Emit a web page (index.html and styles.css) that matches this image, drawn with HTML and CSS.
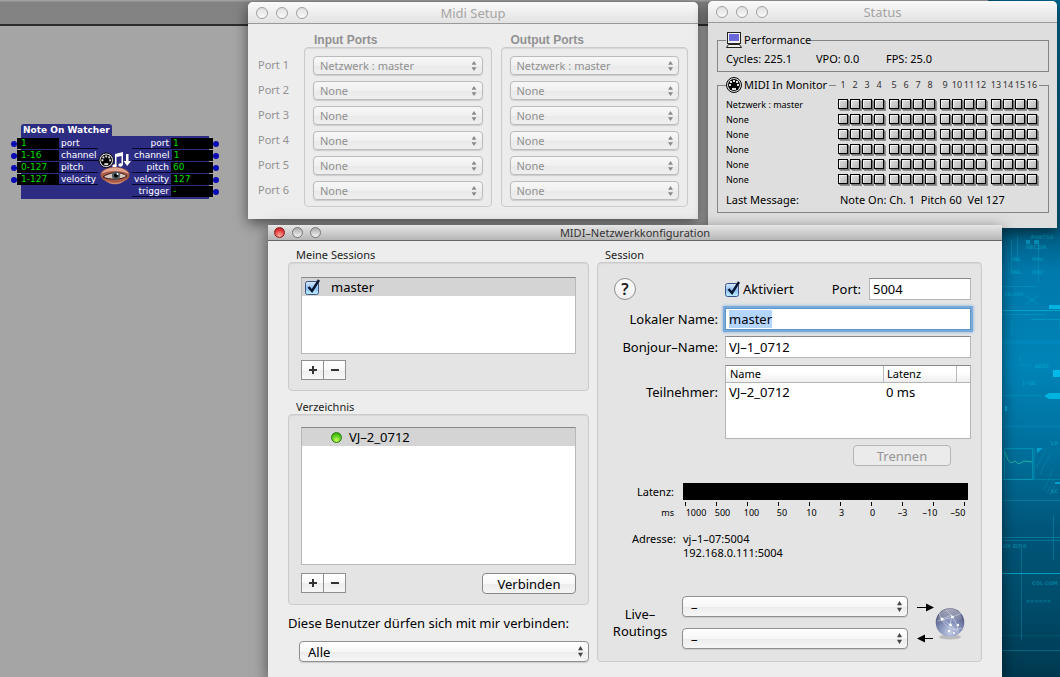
FILE: index.html
```html
<!DOCTYPE html>
<html lang="de">
<head>
<meta charset="utf-8">
<title>MIDI-Netzwerkkonfiguration</title>
<link rel="stylesheet" href="styles.css">
</head>
<body>
<svg class="defs" aria-hidden="true">
  <defs>
    <linearGradient id="face" x1="0" y1="0" x2="1" y2="1"><stop offset="0" stop-color="#e4e4e4"/><stop offset="1" stop-color="#b4b4b4"/></linearGradient>
    <linearGradient id="tickbox" x1="0" y1="0" x2="0" y2="1"><stop offset="0" stop-color="#dcebfb"/><stop offset=".5" stop-color="#8fc0f3"/><stop offset="1" stop-color="#bdf0ff"/></linearGradient>
    <radialGradient id="orb" cx=".5" cy=".85" r=".85"><stop offset="0" stop-color="#c3cbe6"/><stop offset=".45" stop-color="#8490b8"/><stop offset="1" stop-color="#3c4168"/></radialGradient>
    <linearGradient id="gloss" x1="0" y1="0" x2="0" y2="1"><stop offset="0" stop-color="#fff" stop-opacity=".55"/><stop offset="1" stop-color="#fff" stop-opacity=".05"/></linearGradient>
    <linearGradient id="sea" x1="0" y1="0" x2="0" y2="1"><stop offset="0" stop-color="#00688f"/><stop offset=".34" stop-color="#005b80"/><stop offset=".4" stop-color="#0079ab"/><stop offset=".54" stop-color="#0084b8"/><stop offset=".68" stop-color="#006d98"/><stop offset=".78" stop-color="#00567a"/><stop offset=".9" stop-color="#004b69"/><stop offset="1" stop-color="#00384f"/></linearGradient>
    <g id="led"><rect x="2" y="2" width="10" height="10" fill="#555" opacity=".55"/><rect x="1" y="1" width="10" height="10" fill="#777" /><rect x=".5" y=".5" width="9" height="9" fill="url(#face)" stroke="#000"/><path d="M1.5 8.500V1.500H8.500" fill="none" stroke="#f4f4f4"/></g>
    <g id="led-four"><use href="#led"/><use href="#led" x="12"/><use href="#led" x="24"/><use href="#led" x="36"/></g>
    <g id="led-row"><use href="#led-four"/><use href="#led-four" x="51"/><use href="#led-four" x="102"/><use href="#led-four" x="153"/></g>
    <g id="din"><circle cx="8" cy="8" r="7.500" fill="#ddd" stroke="#000"/><circle cx="8" cy="8" r="6" fill="#000"/><g fill="#ddd"><rect x="3" y="7" width="2" height="2"/><rect x="4" y="4" width="2" height="2"/><rect x="7" y="3" width="2" height="2"/><rect x="10" y="4" width="2" height="2"/><rect x="11" y="7" width="2" height="2"/><rect x="6" y="11" width="4" height="2"/></g></g>
  </defs>
</svg>

<main class="desktop">
  <svg class="wallpaper" viewBox="0 0 60 677" preserveAspectRatio="xMaxYMin slice" aria-hidden="true">
    <rect width="60" height="677" fill="url(#sea)"/>
    <g fill="none" stroke="#00b0cc" stroke-width="1">
      <path d="M0 310.500H60M0 573.500H60" opacity=".85"/>
      <path d="M0 314.500H46M0 395.500H42M0 479.500H60M0 537.500H60M0 540.500H60M0 650.500H60M0 286.500H36M0 500.500H60" opacity=".35"/>
      <path d="M11.500 240V275M17.500 236V262M38.500 240V282M11.500 320V336M20.500 355V365H30M53.500 515V560M21.500 545V640" opacity=".3"/>
      <path d="M4.500 448.500H32.500V479.500H4.500ZM34 448V479M31 319.500H60V330M26 295L38 305M38 295L26 305" opacity=".5"/>
      <path d="M5 452L8 460 11 463 15 461 19 464 24 461 32 462" stroke="#2fd0a8" opacity=".7"/>
      <path d="M44 490L53 470M47 493L54 479M50 495L55 486M36 468L46 448M40 474L50 454" opacity=".25"/>
    </g>
    <g fill="#00b9e6">
      <rect x="49" y="305" width="11" height="4" opacity=".9"/><rect x="53" y="370" width="7" height="7"/><path d="M44 396L49 393H60V399H49Z" opacity=".9"/><rect x="5" y="406" width="2" height="5" opacity=".8"/><rect x="26" y="240" width="4" height="4" opacity=".5"/><rect x="34" y="240" width="5" height="4" opacity=".5"/><path d="M37 448H43L37 453Z" opacity=".7"/>
      <rect x="55" y="482" width="5" height="2" opacity=".7"/><rect x="0" y="635" width="60" height="1" opacity=".1"/><rect x="0" y="340" width="60" height="4" opacity=".12"/><rect x="0" y="425" width="60" height="3" opacity=".12"/>
    </g>
    <g class="wallpaper-text">
      <text x="26" y="249">VECZIA</text><text x="31" y="239">PORTSO</text><text x="12" y="261">INL</text><text x="32" y="261">00U</text><text x="12" y="274">INL</text><text x="32" y="274">00U</text><text x="4" y="296">28.000</text><text x="35" y="368">AEEC</text><text x="22" y="385">1–GE</text><text x="3" y="548">UX EIT 0</text><text x="32" y="585">COL COM</text><text x="26" y="603">======</text><text x="51" y="445">LX</text><text x="51" y="493">EC</text>
    </g>
  </svg>
  <div class="backdrop"><div class="backdrop-bar"></div></div>

  <section class="node" aria-label="Note On Watcher">
    <h2 class="node-title">Note On Watcher</h2>
    <div class="node-body">
      <div class="node-side">
        <label class="jack"><i class="pin"></i><input class="node-value" value="1"><span class="node-name">port</span></label>
        <label class="jack"><i class="pin"></i><input class="node-value" value="1-16"><span class="node-name">channel</span></label>
        <label class="jack"><i class="pin"></i><input class="node-value" value="0-127"><span class="node-name">pitch</span></label>
        <label class="jack"><i class="pin"></i><input class="node-value" value="1-127"><span class="node-name">velocity</span></label>
      </div>
      <svg class="node-icon" viewBox="0 0 34 50" aria-hidden="true">
        <use href="#din" x="0" y="16" transform="translate(.5 0) scale(.97)"/>
        <g fill="#fff"><ellipse cx="16.500" cy="29" rx="2.200" ry="1.800"/><ellipse cx="22.500" cy="28" rx="2.200" ry="1.800"/><path d="M17 17L25 15V28H23.500V19L18.500 20V29H17Z"/><path d="M28 17H30.500V24H33L29.200 29 25.500 24H28Z"/></g>
        <ellipse cx="17" cy="38" rx="14.500" ry="8" fill="#a75b46"/><path d="M3 37C8 29 25 28 31 37C24 33 10 33 3 37Z" fill="#e0a68f"/><path d="M5 40C11 35 23 34 29 39C24 43 11 43 5 40Z" fill="#d3c4be" stroke="#3a1a14"/><circle cx="18" cy="38.500" r="4" fill="#4d5a60"/><circle cx="18" cy="38.500" r="2" fill="#000"/><circle cx="19.500" cy="37" r="1" fill="#fff"/><path d="M6 42C12 47 22 47 28 42C23 49 11 49 6 42Z" fill="#d28a72"/>
      </svg>
      <div class="node-side">
        <label class="jack out"><span class="node-name">port</span><output class="node-value">1</output><i class="pin"></i></label>
        <label class="jack out"><span class="node-name">channel</span><output class="node-value">1</output><i class="pin"></i></label>
        <label class="jack out"><span class="node-name">pitch</span><output class="node-value">60</output><i class="pin"></i></label>
        <label class="jack out"><span class="node-name">velocity</span><output class="node-value">127</output><i class="pin"></i></label>
        <label class="jack out"><span class="node-name">trigger</span><output class="node-value">-</output><i class="pin"></i></label>
      </div>
    </div>
  </section>

  <section class="window setup">
    <header class="titlebar"><span class="lights"><button aria-label="Close"></button><button aria-label="Minimize"></button><button aria-label="Zoom"></button></span><h1>Midi Setup</h1></header>
    <div class="ports">
      <div class="port-names"><span>Port 1</span><span>Port 2</span><span>Port 3</span><span>Port 4</span><span>Port 5</span><span>Port 6</span></div>
      <div class="port-column">
        <h2>Input Ports</h2>
        <div class="group port-list">
          <span class="popup small"><select disabled aria-label="Input Port 1"><option>Netzwerk : master</option></select></span>
          <span class="popup small"><select disabled aria-label="Input Port 2"><option>None</option></select></span>
          <span class="popup small"><select disabled aria-label="Input Port 3"><option>None</option></select></span>
          <span class="popup small"><select disabled aria-label="Input Port 4"><option>None</option></select></span>
          <span class="popup small"><select disabled aria-label="Input Port 5"><option>None</option></select></span>
          <span class="popup small"><select disabled aria-label="Input Port 6"><option>None</option></select></span>
        </div>
      </div>
      <div class="port-column">
        <h2>Output Ports</h2>
        <div class="group port-list">
          <span class="popup small"><select disabled aria-label="Output Port 1"><option>Netzwerk : master</option></select></span>
          <span class="popup small"><select disabled aria-label="Output Port 2"><option>None</option></select></span>
          <span class="popup small"><select disabled aria-label="Output Port 3"><option>None</option></select></span>
          <span class="popup small"><select disabled aria-label="Output Port 4"><option>None</option></select></span>
          <span class="popup small"><select disabled aria-label="Output Port 5"><option>None</option></select></span>
          <span class="popup small"><select disabled aria-label="Output Port 6"><option>None</option></select></span>
        </div>
      </div>
    </div>
  </section>

  <section class="window status">
    <header class="titlebar"><span class="lights"><button aria-label="Close"></button><button aria-label="Minimize"></button><button aria-label="Zoom"></button></span><h1>Status</h1></header>
    <div class="status-body">
      <fieldset class="frame">
        <legend><svg class="legend-icon" viewBox="0 0 16 16" aria-hidden="true"><rect x="1.500" y=".5" width="13" height="11" fill="#f2f2f2" stroke="#222"/><rect x="3" y="2" width="10" height="7" fill="#6a68d8"/><path d="M2.500 12.500H13.500L15.500 15.500H.5Z" fill="#eee" stroke="#222"/></svg><span>Performance</span></legend>
        <div class="stats"><span>Cycles: 225.1</span><span>VPO: 0.0</span><span>FPS: 25.0</span></div>
      </fieldset>
      <fieldset class="frame monitor">
        <legend><svg class="legend-icon" viewBox="0 0 16 16" aria-hidden="true"><use href="#din"/></svg><span>MIDI In Monitor</span><i class="rule"></i><span class="channels"><b>1</b><b>2</b><b>3</b><b>4</b><b>5</b><b>6</b><b>7</b><b>8</b><b>9</b><b>10</b><b>11</b><b>12</b><b>13</b><b>14</b><b>15</b><b>16</b></span></legend>
        <div class="monitor-row"><span>Netzwerk : master</span><svg class="leds"><use href="#led-row"/></svg></div>
        <div class="monitor-row"><span>None</span><svg class="leds"><use href="#led-row"/></svg></div>
        <div class="monitor-row"><span>None</span><svg class="leds"><use href="#led-row"/></svg></div>
        <div class="monitor-row"><span>None</span><svg class="leds"><use href="#led-row"/></svg></div>
        <div class="monitor-row"><span>None</span><svg class="leds"><use href="#led-row"/></svg></div>
        <div class="monitor-row"><span>None</span><svg class="leds"><use href="#led-row"/></svg></div>
        <div class="message"><span>Last Message:</span><span>Note On: Ch. 1&nbsp; Pitch 60&nbsp; Vel 127</span></div>
      </fieldset>
    </div>
  </section>

  <section class="window config">
    <header class="titlebar active"><span class="lights"><button class="close" aria-label="Schließen"></button><button aria-label="Minimieren"></button><button aria-label="Zoomen"></button></span><h1>MIDI–Netzwerkkonfiguration</h1></header>
    <div class="config-body">
      <div class="left">
        <h2 class="caption">Meine Sessions</h2>
        <div class="group sessions">
          <div class="list"><label class="item"><span class="check"><input type="checkbox" checked><svg viewBox="0 0 16 18" aria-hidden="true"><rect x=".5" y="3.500" width="13" height="13" rx="2" fill="url(#tickbox)" stroke="#3b5288"/><path d="M3.500 9L7 13 14 2" fill="none" stroke="#0a1530" stroke-width="2.400"/></svg></span>master</label></div>
          <div class="buttons"><span class="plusminus"><button aria-label="Hinzufügen"><svg viewBox="0 0 8 8"><path d="M0 4H8M4 0V8" stroke="#333" stroke-width="2"/></svg></button><button aria-label="Entfernen"><svg viewBox="0 0 8 8"><path d="M0 4H8" stroke="#333" stroke-width="2"/></svg></button></span></div>
        </div>
        <h2 class="caption">Verzeichnis</h2>
        <div class="group directory">
          <div class="list"><div class="item item-peer"><i class="online"></i>VJ–2_0712</div></div>
          <div class="buttons"><span class="plusminus"><button aria-label="Hinzufügen"><svg viewBox="0 0 8 8"><path d="M0 4H8M4 0V8" stroke="#333" stroke-width="2"/></svg></button><button aria-label="Entfernen"><svg viewBox="0 0 8 8"><path d="M0 4H8" stroke="#333" stroke-width="2"/></svg></button></span><button class="push">Verbinden</button></div>
        </div>
        <label class="users" for="users">Diese Benutzer dürfen sich mit mir verbinden:</label>
        <span class="popup users-popup"><select id="users"><option>Alle</option></select></span>
      </div>

      <div class="right">
        <h2 class="caption">Session</h2>
        <form class="group session">
          <div class="row head-row">
            <button type="button" class="help" aria-label="Hilfe">?</button>
            <label class="enable"><span class="check"><input type="checkbox" checked><svg viewBox="0 0 16 18" aria-hidden="true"><rect x=".5" y="3.500" width="13" height="13" rx="2" fill="url(#tickbox)" stroke="#3b5288"/><path d="M3.500 9L7 13 14 2" fill="none" stroke="#0a1530" stroke-width="2.400"/></svg></span>Aktiviert</label>
            <label for="port">Port:</label><input class="field port-field" id="port" value="5004">
          </div>
          <div class="row"><label class="name" for="local-name">Lokaler Name:</label><input class="field" id="local-name" value="master"></div>
          <div class="row"><label class="name" for="bonjour">Bonjour–Name:</label><input class="field" id="bonjour" value="VJ–1_0712"></div>
          <div class="row table-row"><span class="name" id="peers">Teilnehmer:</span>
            <div class="table-box"><table aria-labelledby="peers"><thead><tr><th>Name</th><th>Latenz</th><th></th></tr></thead><tbody><tr><td>VJ–2_0712</td><td>0 ms</td><td></td></tr></tbody></table></div>
          </div>
          <button type="button" class="push disconnect" disabled>Trennen</button>
          <div class="row latency"><span class="tiny-name">Latenz:</span><div class="meter"></div></div>
          <div class="row scale"><span class="tiny-name">ms</span>
            <div class="ruler">
              <div class="marks"><i></i><i></i><i></i><i></i><i></i><i></i><i></i><i></i><i></i><i></i></div>
              <div class="ticks"><span>1000</span><span>500</span><span>100</span><span>50</span><span>10</span><span>3</span><span>0</span><span>–3</span><span>–10</span><span>–50</span></div>
            </div>
          </div>
          <div class="row address"><span class="tiny-name">Adresse:</span><span>vj–1–07:5004<br>192.168.0.111:5004</span></div>
          <div class="routing">
            <span class="routing-name">Live–<br>Routings</span>
            <div class="routing-popups">
              <span class="popup"><select aria-label="Live-Routing Ausgang"><option>–</option></select></span>
              <span class="popup"><select aria-label="Live-Routing Eingang"><option>–</option></select></span>
            </div>
            <svg class="network" viewBox="0 0 50 44" aria-hidden="true">
              <path d="M0 6.500H10" stroke="#000"/><path d="M9 2.500L17 6.500 9 10.500Z"/><path d="M6 37.500H16" stroke="#000"/><path d="M8 33.500L0 37.500 8 41.500Z"/>
              <ellipse cx="33" cy="36" rx="11" ry="2.500" fill="#000" opacity=".18"/>
              <circle cx="33" cy="21.500" r="14.300" fill="url(#orb)"/><path d="M21 18C22 4 44 4 45 18C38 22 28 22 21 18Z" fill="url(#gloss)"/>
              <g fill="none" stroke="#e8ecfa" stroke-width=".7" opacity=".7"><path d="M22 12C27 26 34 31 45 27M20 20C28 19 39 15 44 12M25 18L35 14 33 24 40 30M33 24L25 18M29 9C35 14 42 24 41 32"/></g>
              <g fill="#fff"><circle cx="25" cy="18" r="1.500"/><circle cx="35.500" cy="16" r="1.300"/><circle cx="33.500" cy="24" r="1.400"/><circle cx="41" cy="24" r="1.200"/><circle cx="32" cy="30" r="1.200"/><circle cx="37" cy="32" r="1"/></g>
            </svg>
          </div>
        </form>
      </div>
    </div>
  </section>
</main>
<script src="app.js"></script>
</body>
</html>
```
FILE: styles.css
```css
* { box-sizing: border-box; }
body { margin: 0; font: 13px/16px "Noto Sans", sans-serif; color: #000; }
button, input, select { font: inherit; color: inherit; margin: 0; }
h1, h2 { margin: 0; font-weight: 400; }
.defs { position: absolute; width: 0; height: 0; }

.desktop { position: relative; min-height: 100vh; overflow: hidden; background: #005b80; }
.wallpaper { position: absolute; top: 0; right: 0; width: 60px; height: 677px; }
.wallpaper-text { font: 700 5px "DejaVu Sans", sans-serif; fill: #00c0dc; opacity: .4; }
.backdrop { position: absolute; inset: 0 72px 0 0; background: #a5a5a5; }
.backdrop-bar { height: 26px; background: linear-gradient(#a0a0a0 1px, #838383 2px); border-bottom: 2px solid #2c2c2c; }

/* patch node */
.node { position: absolute; left: 11px; top: 124px; color: #fff; font: 9px/12px "DejaVu Sans", sans-serif; }
.node-title { display: inline-block; margin-left: 10px; padding: 0 2px; background: #2c2c82; border-radius: 3px 3px 0 0; font-size: 9px; font-weight: 700; line-height: 12px; vertical-align: top; }
.node-body { display: flex; min-height: 63px; padding-top: 1px; background: linear-gradient(#2c2c82, #2c2c82) 10px 0 / calc(100% - 20px) 100% no-repeat; }
.node-side { width: 87px; }
.jack { display: flex; align-items: center; height: 12px; padding-top: 1px; }
.pin { flex: none; width: 6px; height: 6px; border-radius: 50%; background: #0b0bb4; }
.node-value { width: 42px; height: 11px; padding: 0 4px; border: 0; background: #000; color: #0d0; font: inherit; line-height: 11px; }
.node-name { flex: 1; height: 11px; padding: 0 2px; border-bottom: 1px solid #05052c; line-height: 11px; }
.out .node-name { text-align: right; }
.out .node-value { padding: 0 2px; }
.node-icon { width: 34px; height: 50px; }

/* windows */
.window { position: absolute; background: #ededed; border-radius: 5px 5px 0 0; box-shadow: 0 4px 14px rgba(0, 0, 0, .55); }
.titlebar { display: grid; grid-template-columns: 70px 1fr 70px; align-items: center; height: 22px; border-bottom: 1px solid #999; border-radius: 5px 5px 0 0; background: linear-gradient(#fafafa, #e2e2e2); color: #a5a5a5; }
.titlebar h1 { font-size: 13px; text-align: center; }
.lights { display: flex; gap: 8px; padding-left: 8px; }
.lights button { width: 12px; height: 12px; padding: 0; border: 1px solid #a0a0a0; border-radius: 50%; background: linear-gradient(#e0e0e0, #fafafa); }
.active { height: 16px; background: linear-gradient(#e6e6e6, #b6b6b6); border-color: #666; color: #333; border-radius: 0; }
.active h1 { font-size: 11px; line-height: 14px; }
.active .lights { gap: 7px; padding-left: 6px; }
.active .lights button { width: 11px; height: 11px; border-color: #777; background: linear-gradient(#aaa, #f4f4f4); }
.active .lights .close { border-color: #87201f; background: radial-gradient(circle at 50% 85%, #ffb0a0, #e3383a 60%, #b02020); }

.group { border: 1px solid #cbcbcb; border-radius: 4px; background: #e4e4e4; box-shadow: inset 0 1px 1px #d6d6d6; }
.popup { position: relative; display: block; }
.popup select { appearance: none; display: block; width: 100%; height: 21px; padding: 0 8px; border: 1px solid #8f8f8f; border-radius: 4px; background: linear-gradient(#fff, #f6f6f6 50%, #ececec 51%, #f6f6f6); box-shadow: 0 1px 1px #ccc; }
.popup::after { content: ""; position: absolute; top: 5px; right: 6px; width: 5px; height: 11px; background: #444; clip-path: polygon(50% 0, 100% 38%, 50% 38%, 50% 62%, 100% 62%, 50% 100%, 0 62%, 50% 62%, 50% 38%, 0 38%); }
.popup.small select { height: 19px; padding: 0 6px; border-color: #bcbcbc; color: #909090; opacity: 1; background: linear-gradient(#f7f7f7, #f0f0f0 50%, #e9e9e9 51%, #efefef); }
.popup.small::after { height: 10px; background: #8a8a8a; }

.setup { left: 248px; top: 2px; width: 450px; font-size: 11px; color: #929292; }
.ports { display: grid; grid-template-columns: 37px 1fr 1fr; gap: 9px; padding: 10px 10px 12px; }
.port-names { display: flex; flex-direction: column; gap: 6px; padding-top: 21px; line-height: 19px; }
.port-column h2 { padding: 0 10px; font: 700 12px/13px "Liberation Sans", sans-serif; }
.port-list { display: grid; gap: 6px; padding: 8px 8px 6px; background: #ececec; }

.status { right: 3px; top: 1px; width: 349px; background: #dedede; font-size: 11px; padding-bottom: 15px; }
.status-body { display: grid; gap: 4px; padding: 8px 8px 0 9px; }
.frame { min-width: 0; margin: 0; padding: 1px 8px 3px; border: 1px solid #858585; }
.frame legend { display: flex; align-items: center; gap: 2px; height: 18px; padding: 0; }
.legend-icon { width: 16px; height: 16px; }
.stats { display: flex; line-height: 18px; }
.stats span { width: 90px; }
.stats span + span { width: 70px; }
.rule { flex: 1; height: 1px; background: #858585; }
.monitor { padding: 1px 9px 4px 8px; }
.monitor legend { width: 100%; }
.channels { display: grid; grid-template-columns: repeat(3, 12px 12px 12px 15px) repeat(4, 12px); font-size: 9px; color: #333; }
.channels b { width: 10px; display: flex; justify-content: center; font-weight: 400; }
.monitor-row { display: flex; justify-content: space-between; height: 15px; padding-top: 4px; font-size: 9px; line-height: 11px; }
.leds { width: 201px; height: 12px; overflow: visible; }
.message { display: flex; padding-top: 7px; }
.message span:first-child { width: 114px; }

.config { left: 268px; right: 58px; top: 225px; bottom: 0; border-radius: 0; }
.config-body { display: grid; grid-template-columns: 301px minmax(0, 1fr); gap: 8px; padding: 6px 20px 16px; }
.caption { padding: 0 8px; font-size: 11px; line-height: 15px; color: #222; }
.left, .right { display: flex; flex-direction: column; }
.left .group { padding: 14px 12px 10px; }
.list { border: 1px solid #b8b8b8; border-top-color: #888; background: #fff; }
.sessions .list { height: 77px; }
.directory .list { height: 138px; }
.left .directory { padding-top: 12px; }
.sessions { margin-bottom: 8px; }
.item { display: flex; align-items: center; gap: 10px; height: 18px; padding-left: 3px; background: #d4d4d4; }
.item-peer { gap: 7px; padding-left: 29px; }
.online { width: 11px; height: 11px; border: 1px solid #2d7a10; border-radius: 50%; background: radial-gradient(circle at 50% 80%, #c8ff60, #50c818 60%, #2f9b10); }
.check { position: relative; display: inline-block; width: 16px; height: 18px; }
.check input { width: 14px; height: 14px; opacity: 0; }
.check svg { position: absolute; inset: 0; pointer-events: none; }
.buttons { display: flex; justify-content: space-between; margin-top: 6px; }
.directory .buttons { margin-top: 8px; }
.plusminus { display: flex; }
.plusminus button { display: grid; place-items: center; width: 23px; height: 20px; padding: 0; border: 1px solid #8f8f8f; background: linear-gradient(#fff, #fafafa 50%, #eee 51%, #f6f6f6); }
.plusminus button + button { border-left: 0; width: 22px; }
.plusminus svg { width: 8px; height: 8px; }
.push { width: 94px; height: 21px; padding: 0; border: 1px solid #888; border-radius: 4px; background: linear-gradient(#fff, #f8f8f8 50%, #ececec 51%, #f4f4f4); line-height: 16px; }
.push:disabled { border-color: #b5b5b5; background: #ebebeb; color: #959595; }
.users { margin: 10px 0; }
.users-popup { margin-left: 11px; }

.session { flex: 1; padding: 15px 10px 8px 0; }
.row { display: flex; align-items: center; margin-bottom: 6px; }
.name { flex: none; width: 127px; padding-right: 7px; text-align: right; }
.field { flex: 1; min-width: 0; height: 22px; padding: 0 3px; border: 1px solid #b4b4b4; border-top-color: #888; background: #fff; outline: 0; }
.field:focus { border-color: #5f97cb; box-shadow: 0 0 0 2px #78aadb, 0 0 3px 2px #78aadb; }
.field::selection { background: #b4d5fe; color: #000; }
.head-row { margin-bottom: 8px; }
.help { width: 22px; height: 22px; margin: 0 89px 0 16px; padding: 0; border: 1px solid #8f8f8f; border-radius: 50%; background: linear-gradient(#fff, #eee); font-size: 16px; font-weight: 600; line-height: 18px; color: #222; }
.enable { display: flex; gap: 2px; align-items: center; margin-right: auto; }
.port-field { flex: none; width: 102px; margin-left: 8px; }
.table-row { margin: 7px 0 6px; }
.table-row .name { padding-bottom: 20px; }
.table-box { flex: 1; height: 74px; border: 1px solid #b4b4b4; border-top-color: #888; background: #fff; }
table { width: 100%; border-collapse: collapse; table-layout: fixed; }
th { height: 16px; padding: 0 4px; background: linear-gradient(#fff 40%, #eee); border-bottom: 1px solid #b4b4b4; font-size: 11px; line-height: 13px; font-weight: 400; text-align: left; }
th + th { width: 73px; box-shadow: inset 1px 0 #bbb; }
th:last-child { width: 14px; }
td { height: 20px; padding: 0 3px; }
.disconnect { display: block; width: 98px; margin: 0 20px 17px auto; }
.tiny-name { flex: none; width: 85px; padding-right: 9px; text-align: right; font-size: 11px; }
.latency { margin: 0 3px 1px 0; }
.meter { flex: 1; height: 17px; background: #000; }
.scale { margin: 0 0 13px; align-items: flex-start; font-size: 9px; line-height: 12px; }
.scale .tiny-name { padding-top: 6px; font-size: 9px; }
.marks { display: flex; justify-content: space-between; width: 280px; margin: 1px 0 1px 2px; }
.marks i { width: 1px; height: 4px; background: #000; }
.ticks { display: grid; grid-template-columns: 26px 27px 31px 30px 29px 31px 31px 29px 26px 30px; text-align: center; }
.address { align-items: flex-start; font-size: 11px; line-height: 14px; margin-bottom: 36px; }
.address .tiny-name { padding-right: 7px; }
.routing { display: flex; align-items: center; }
.routing-name { width: 84px; text-align: center; line-height: 17px; }
.routing-popups { flex: 1; display: grid; gap: 11px; }
.network { width: 50px; height: 44px; margin: 0 4px 0 9px; }
```
FILE: app.js
```js
const localName = document.getElementById("local-name");
localName.focus();
localName.select();
```
